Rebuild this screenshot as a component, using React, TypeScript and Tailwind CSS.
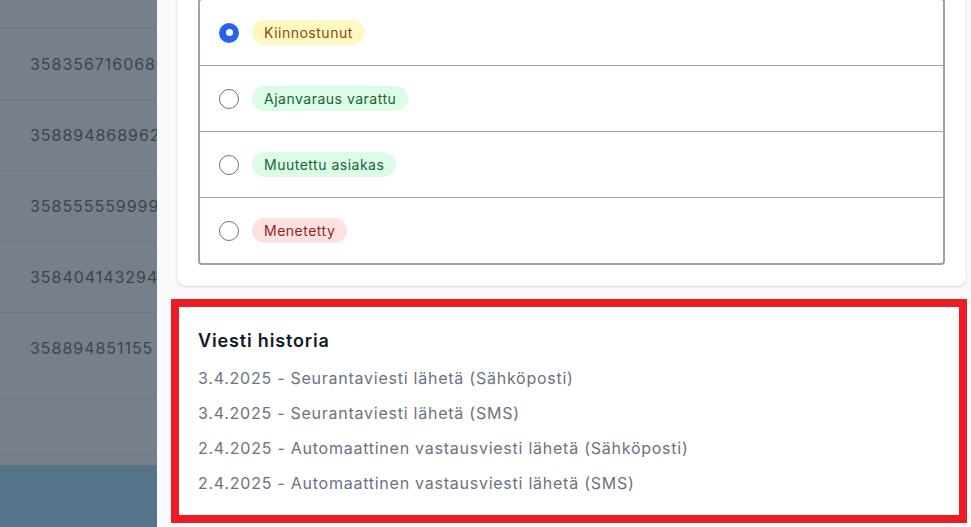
import React from 'react';

const numbers = ['358356716068', '358894868962', '358555559999', '358404143294'];

const statuses = [
  { label: 'Kiinnostunut', cls: 'bg-[#fef9c3] text-[#854d0e]', checked: true },
  { label: 'Ajanvaraus varattu', cls: 'bg-[#dcfce7] text-[#166534]', checked: false },
  { label: 'Muutettu asiakas', cls: 'bg-[#dcfce7] text-[#166534]', checked: false },
  { label: 'Menetetty', cls: 'bg-[#fee2e2] text-[#991b1b]', checked: false },
];

const history = [
  '3.4.2025 - Seurantaviesti lähetä (Sähköposti)',
  '3.4.2025 - Seurantaviesti lähetä (SMS)',
  '2.4.2025 - Automaattinen vastausviesti lähetä (Sähköposti)',
  '2.4.2025 - Automaattinen vastausviesti lähetä (SMS)',
];

function Radio({ checked }: { checked: boolean }) {
  if (checked) {
    return (
      <span className="flex h-5 w-5 shrink-0 items-center justify-center rounded-full bg-[#2563eb]">
        <span className="h-[7px] w-[7px] rounded-full bg-white" />
      </span>
    );
  }
  return <span className="h-5 w-5 shrink-0 rounded-full border border-[#6b7280] bg-white" />;
}

export default function App() {
  return (
    <div
      className="flex h-[527px] w-[971px] overflow-hidden"
      style={{ fontFamily: 'Inter, "Noto Sans", sans-serif' }}
    >
      {/* taustalla oleva taulukko (peitetty) */}
      <div className="flex w-[157px] shrink-0 flex-col overflow-hidden bg-[#777f8a] text-base tracking-[0.06em] text-[#3e444c]">
        <div className="h-[29px] shrink-0 border-b border-[#6f7681]" />
        {numbers.map((n) => (
          <div
            key={n}
            className="flex h-[71px] shrink-0 items-center whitespace-nowrap border-b border-[#6f7681] px-[30px]"
          >
            {n}
          </div>
        ))}
        <div className="h-[86px] shrink-0 whitespace-nowrap border-b border-[#6f7681] px-[30px] pt-[23px]">
          358894851155
        </div>
        <div className="h-[56px] shrink-0 border-b border-[#6f7681]" />
        <div className="h-[10px] shrink-0" />
        <div className="flex-1 bg-[#557489]" />
      </div>

      {/* sivupaneeli */}
      <div className="flex min-w-0 flex-1 flex-col bg-[#f9fafb] pl-5 pr-[5px]">
        <div className="-mt-[23px] rounded-lg border border-gray-100 bg-white p-5 shadow-sm">
          <div className="divide-y divide-[#9ca3af] rounded border-2 border-[#9ca3af]">
            {statuses.map((s) => (
              <label key={s.label} className="box-content flex h-[65px] items-center gap-[13px] pl-[19px]">
                <Radio checked={s.checked} />
                <span
                  className={`rounded-full px-3 py-[3px] text-sm leading-[19px] tracking-[0.036em] ${s.cls}`}
                >
                  {s.label}
                </span>
              </label>
            ))}
          </div>
        </div>

        <div className="-ml-[6px] -mr-[1px] mt-[13px] border-8 border-[#ed1c24] bg-white px-[19px] pb-5 pt-5">
          <h2 className="mb-[11px] text-lg font-semibold leading-7 tracking-[0.047em] text-[#111827]">
            Viesti historia
          </h2>
          <div className="flex flex-col gap-[11px]">
            {history.map((h) => (
              <p key={h} className="text-base leading-6 tracking-[0.047em] text-[#6b7280]">
                {h}
              </p>
            ))}
          </div>
        </div>
      </div>
    </div>
  );
}
